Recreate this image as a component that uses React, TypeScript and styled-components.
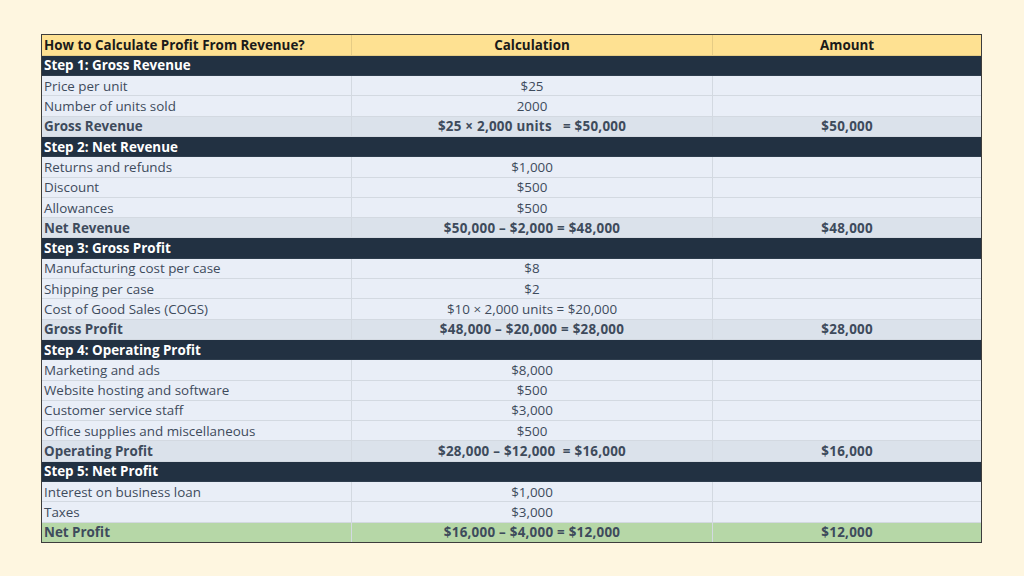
import styled, { createGlobalStyle } from "styled-components";

const GlobalStyle = createGlobalStyle`
  html, body {
    margin: 0;
    padding: 0;
    background: #fef6e0;
  }
  body {
    font-family: "Open Sans", "Noto Sans", sans-serif;
  }
`;

type Kind = "head" | "step" | "item" | "total" | "final";

type Row = {
  kind: Kind;
  label: string;
  calc?: string;
  amount?: string;
};

const rows: Row[] = [
  { kind: "step", label: "Step 1: Gross Revenue" },
  { kind: "item", label: "Price per unit", calc: "$25" },
  { kind: "item", label: "Number of units sold", calc: "2000" },
  { kind: "total", label: "Gross Revenue", calc: "$25 × 2,000 units \u00a0 = $50,000", amount: "$50,000" },
  { kind: "step", label: "Step 2: Net Revenue" },
  { kind: "item", label: "Returns and refunds", calc: "$1,000" },
  { kind: "item", label: "Discount", calc: "$500" },
  { kind: "item", label: "Allowances", calc: "$500" },
  { kind: "total", label: "Net Revenue", calc: "$50,000 – $2,000 = $48,000", amount: "$48,000" },
  { kind: "step", label: "Step 3: Gross Profit" },
  { kind: "item", label: "Manufacturing cost per case", calc: "$8" },
  { kind: "item", label: "Shipping per case", calc: "$2" },
  { kind: "item", label: "Cost of Good Sales (COGS)", calc: "$10 × 2,000 units = $20,000" },
  { kind: "total", label: "Gross Profit", calc: "$48,000 – $20,000 = $28,000", amount: "$28,000" },
  { kind: "step", label: "Step 4: Operating Profit" },
  { kind: "item", label: "Marketing and ads", calc: "$8,000" },
  { kind: "item", label: "Website hosting and software", calc: "$500" },
  { kind: "item", label: "Customer service staff", calc: "$3,000" },
  { kind: "item", label: "Office supplies and miscellaneous", calc: "$500" },
  { kind: "total", label: "Operating Profit", calc: "$28,000 – $12,000 \u00a0= $16,000", amount: "$16,000" },
  { kind: "step", label: "Step 5: Net Profit" },
  { kind: "item", label: "Interest on business loan", calc: "$1,000" },
  { kind: "item", label: "Taxes", calc: "$3,000" },
  { kind: "final", label: "Net Profit", calc: "$16,000 – $4,000 = $12,000", amount: "$12,000" },
];

const backgrounds: Record<Kind, string> = {
  head: "#fee192",
  step: "#223142",
  item: "#e9eef7",
  total: "#dbe2eb",
  final: "#b6d7a7",
};

const Page = styled.div`
  width: 1024px;
  height: 576px;
  padding: 34px 0 0 41px;
  box-sizing: border-box;
`;

const Frame = styled.div`
  width: 941px;
  height: 509px;
  box-sizing: border-box;
  border: 1.5px solid #3d3d3d;
  overflow: hidden;
`;

const Table = styled.table`
  width: 100%;
  height: 100%;
  border-collapse: collapse;
  table-layout: fixed;
  font-size: 13.4px;
`;

const Tr = styled.tr<{ $kind: Kind }>`
  height: 20.3px;
  background: ${(p) => backgrounds[p.$kind]};
  color: ${(p) =>
    p.$kind === "head" ? "#1a1a1a" : p.$kind === "step" ? "#ffffff" : "#3e4b5c"};
  font-weight: ${(p) => (p.$kind === "item" ? 400 : 700)};

  &:first-child td,
  &:first-child th {
    border-top: none;
  }
`;

const Cell = styled.td<{ $center?: boolean; $dark?: boolean; $wide?: boolean }>`
  padding: 0 2px;
  white-space: nowrap;
  text-align: ${(p) => (p.$center ? "center" : "left")};
  border-top: 1px solid ${(p) => (p.$dark ? "#2e3d4d" : "#d3d9e1")};
  border-bottom: 1px solid ${(p) => (p.$dark ? "#2e3d4d" : "#d3d9e1")};
  border-left: 1px solid ${(p) => (p.$dark ? "transparent" : "#d3d9e1")};
  line-height: 18px;
  letter-spacing: ${(p) => (p.$wide ? "0.25px" : "0")};
  overflow: hidden;

  &:first-child {
    border-left: none;
  }
`;

const HeadCell = styled(Cell).attrs({ as: "th" })`
  font-weight: 700;
  border-color: #e6cc85;
`;

const App = () => {
  return (
    <>
      <GlobalStyle />
      <Page>
        <Frame>
          <Table>
            <colgroup>
              <col style={{ width: 309 }} />
              <col style={{ width: 361 }} />
              <col style={{ width: 268 }} />
            </colgroup>
            <thead>
              <Tr $kind="head">
                <HeadCell>How to Calculate Profit From Revenue?</HeadCell>
                <HeadCell $center>Calculation</HeadCell>
                <HeadCell $center>Amount</HeadCell>
              </Tr>
            </thead>
            <tbody>
              {rows.map((r, i) =>
                r.kind === "step" ? (
                  <Tr key={i} $kind="step">
                    <Cell $dark colSpan={3}>
                      {r.label}
                    </Cell>
                  </Tr>
                ) : (
                  <Tr key={i} $kind={r.kind}>
                    <Cell>{r.label}</Cell>
                    <Cell $center $wide={r.kind !== "item"}>
                      {r.calc}
                    </Cell>
                    <Cell $center $wide>
                      {r.amount}
                    </Cell>
                  </Tr>
                )
              )}
            </tbody>
          </Table>
        </Frame>
      </Page>
    </>
  );
};

export default App;
